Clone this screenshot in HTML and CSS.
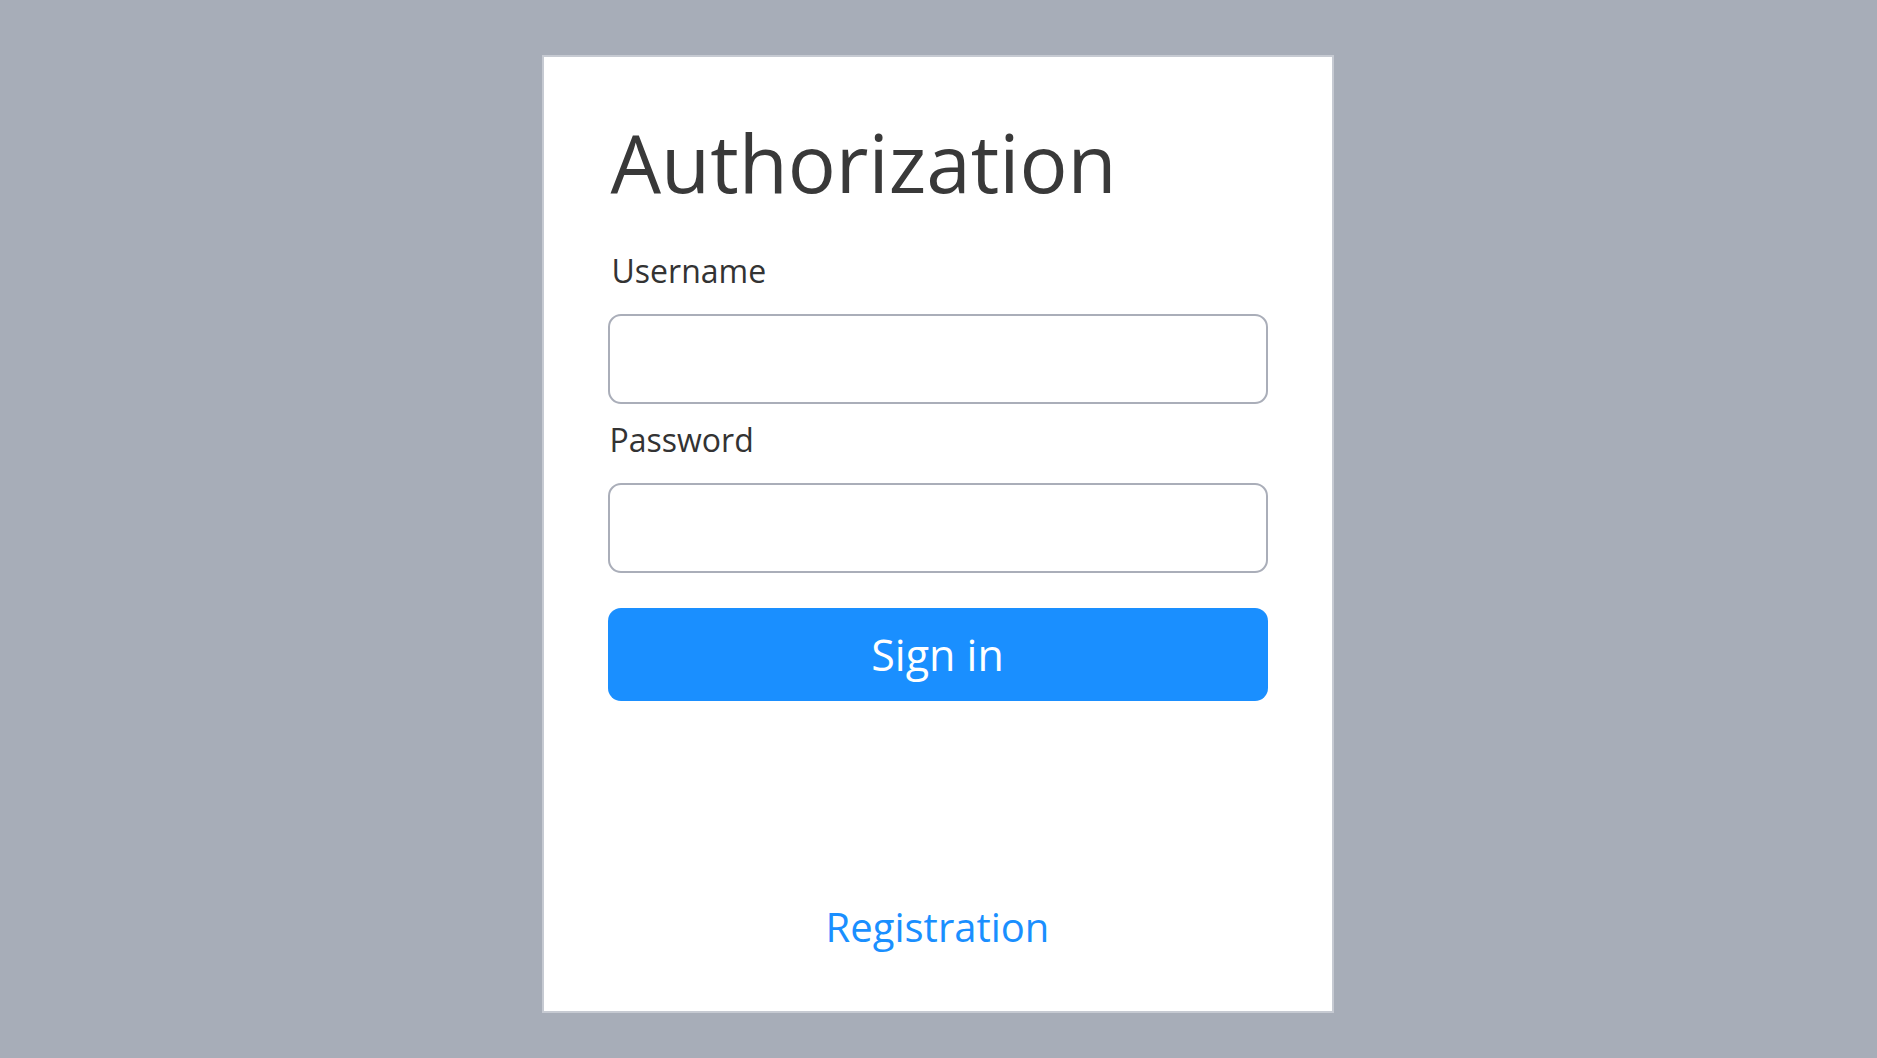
FILE: index.html
```html
<!DOCTYPE html>
<html lang="en">
<head>
<meta charset="utf-8">
<title>Authorization</title>
<link rel="stylesheet" href="styles.css">
</head>
<body>
<main class="page">
  <form class="card">
    <h1 class="title">Authorization</h1>
    <label class="label label-user" for="username">Username</label>
    <input class="field" id="username" type="text">
    <label class="label label-pass" for="password">Password</label>
    <input class="field" id="password" type="password">
    <button class="btn" type="button">Sign in</button>
    <a class="reg" href="#">Registration</a>
  </form>
</main>
</body>
</html>
```
FILE: styles.css
```css
html, body {
  margin: 0;
  padding: 0;
  height: 100%;
}
body {
  background: #a7adb8;
  font-family: "Open Sans", "Noto Sans", sans-serif;
}
.page {
  display: flex;
  justify-content: center;
  padding-top: 55px;
  padding-right: 2px;
}
.card {
  box-sizing: border-box;
  width: 792px;
  height: 958px;
  background: #ffffff;
  border: 2px solid #c6cad2;
  padding: 65px 64px 0 64px;
  display: flex;
  flex-direction: column;
}
.title {
  margin: 0;
  font-size: 80px;
  line-height: 80px;
  font-weight: 400;
  color: #393939;
  padding-left: 3px;
}
.label {
  display: block;
  font-size: 32px;
  line-height: 30px;
  color: #333333;
}
.label-user {
  margin-top: 54px;
  padding-left: 4px;
}
.label-pass {
  margin-top: 21px;
  padding-left: 2px;
}
.field {
  box-sizing: border-box;
  display: block;
  width: 660px;
  height: 90px;
  margin: 28px 0 0 0;
  border: 2px solid #aaaeb9;
  border-radius: 13px;
  background: #ffffff;
  outline: none;
  padding: 0 16px;
  font-family: inherit;
  font-size: 28px;
}
.btn {
  box-sizing: border-box;
  width: 660px;
  height: 93px;
  margin-top: 35px;
  border: none;
  border-radius: 13px;
  background: #1a8fff;
  color: #ffffff;
  font-family: inherit;
  font-size: 43px;
  line-height: 1;
  padding: 0;
  cursor: pointer;
}
.reg {
  align-self: center;
  margin-top: 207px;
  font-size: 40px;
  line-height: 38px;
  color: #1a8fff;
  text-decoration: none;
}
```
